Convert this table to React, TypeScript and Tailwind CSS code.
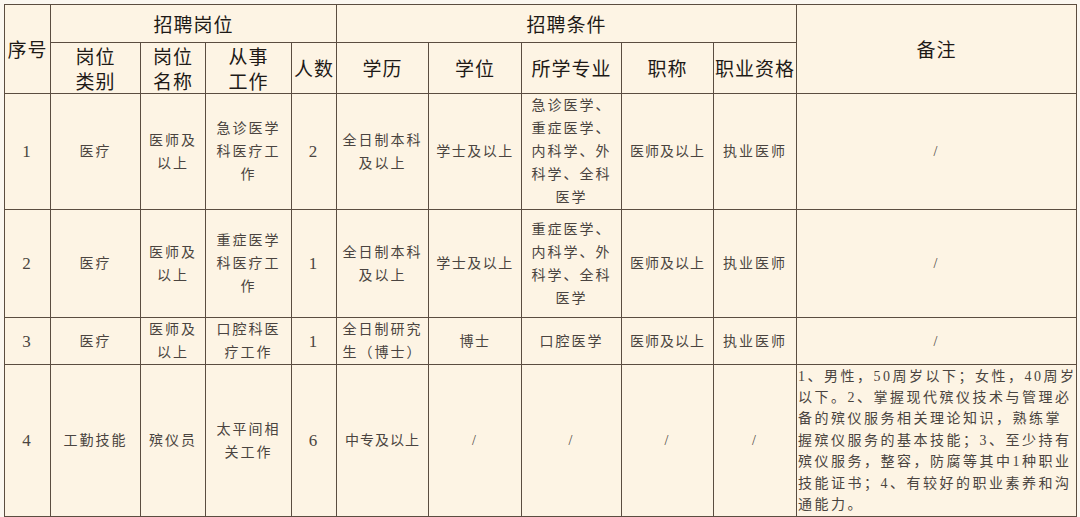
const body = "font-['Liberation_Serif','Noto_Sans_CJK_SC',serif] text-[14px] leading-[23px] tracking-[2px] text-[#4a4440]";

type Row = {
  no: string;
  type: string;
  name: string;
  work: string[];
  count: string;
  edu: string[];
  degree: string;
  major: string[];
  title: string;
  qual: string;
  note: string;
};

const ROWS: Row[] = [
  {
    no: "1",
    type: "医疗",
    name: "医师及以上",
    work: ["急诊医学", "科医疗工", "作"],
    count: "2",
    edu: ["全日制本科", "及以上"],
    degree: "学士及以上",
    major: ["急诊医学、", "重症医学、", "内科学、外", "科学、全科", "医学"],
    title: "医师及以上",
    qual: "执业医师",
    note: "/",
  },
  {
    no: "2",
    type: "医疗",
    name: "医师及以上",
    work: ["重症医学", "科医疗工", "作"],
    count: "1",
    edu: ["全日制本科", "及以上"],
    degree: "学士及以上",
    major: ["重症医学、", "内科学、外", "科学、全科", "医学"],
    title: "医师及以上",
    qual: "执业医师",
    note: "/",
  },
  {
    no: "3",
    type: "医疗",
    name: "医师及以上",
    work: ["口腔科医", "疗工作"],
    count: "1",
    edu: ["全日制研究", "生（博士）"],
    degree: "博士",
    major: ["口腔医学"],
    title: "医师及以上",
    qual: "执业医师",
    note: "/",
  },
];

const NOTE4 = [
  "1、男性，50周岁以下；女性，40周岁",
  "以下。2、掌握现代殡仪技术与管理必",
  "备的殡仪服务相关理论知识，熟练掌",
  "握殡仪服务的基本技能；3、至少持有",
  "殡仪服务，整容，防腐等其中1种职业",
  "技能证书；4、有较好的职业素养和沟",
  "通能力。",
];

const HEIGHTS = ["h-[116px]", "h-[108px]", "h-[44px]"];

function Lines({ items }: { items: string[] }) {
  return (
    <>
      {items.map((t, i) => (
        <div key={i}>{t}</div>
      ))}
    </>
  );
}

const cell = "border border-[#5b4d40] text-center align-middle p-0";
const num = `${cell} text-[17px]`;
const head = "border border-[#5b4d40] text-center align-middle p-0 font-['Noto_Sans_CJK_SC',sans-serif] text-[19px] leading-[24px] text-[#1e1a17] font-normal tracking-[1px]";
const head2 = `${head} leading-[25px]`;

function nameLines(s: string) {
  return s === "医师及以上" ? ["医师及", "以上"] : [s];
}

export default function App() {
  return (
    <div className="h-[517px] w-[1080px] overflow-hidden bg-[#fbf7f0] pt-[4px] pl-[4px]">
      <table className="border-collapse bg-[#fdf4e4] table-fixed w-[1072px]">
        <colgroup>
          <col className="w-[46px]" />
          <col className="w-[90px]" />
          <col className="w-[65px]" />
          <col className="w-[86px]" />
          <col className="w-[45px]" />
          <col className="w-[92px]" />
          <col className="w-[93px]" />
          <col className="w-[100px]" />
          <col className="w-[92px]" />
          <col className="w-[83px]" />
          <col className="w-[280px]" />
        </colgroup>
        <thead>
          <tr className="h-[38px]">
            <th rowSpan={2} className={head}>序号</th>
            <th colSpan={4} className={head}>招聘岗位</th>
            <th colSpan={5} className={head}>招聘条件</th>
            <th rowSpan={2} className={head}>备注</th>
          </tr>
          <tr className="h-[50px]">
            <th className={head2}><div>岗位</div><div>类别</div></th>
            <th className={head2}><div>岗位</div><div>名称</div></th>
            <th className={head2}><div>从事</div><div>工作</div></th>
            <th className={head}>人数</th>
            <th className={head}>学历</th>
            <th className={head}>学位</th>
            <th className={head}>所学专业</th>
            <th className={head}>职称</th>
            <th className={`${head} tracking-[0px]`}>职业资格</th>
          </tr>
        </thead>
        <tbody className={body}>
          {ROWS.map((r, i) => (
            <tr key={r.no} className={HEIGHTS[i]}>
              <td className={num}>{r.no}</td>
              <td className={cell}>{r.type}</td>
              <td className={cell}><Lines items={nameLines(r.name)} /></td>
              <td className={cell}><Lines items={r.work} /></td>
              <td className={num}>{r.count}</td>
              <td className={cell}><Lines items={r.edu} /></td>
              <td className={`${cell} tracking-[1.5px]`}>{r.degree}</td>
              <td className={cell}><Lines items={r.major} /></td>
              <td className={`${cell} tracking-[1px] whitespace-nowrap`}>{r.title}</td>
              <td className={cell}>{r.qual}</td>
              <td className={cell}>{r.note}</td>
            </tr>
          ))}
          <tr className="h-[152px]">
            <td className={num}>4</td>
            <td className={cell}>工勤技能</td>
            <td className={cell}>殡仪员</td>
            <td className={cell}><Lines items={["太平间相", "关工作"]} /></td>
            <td className={num}>6</td>
            <td className={`${cell} tracking-[1px] whitespace-nowrap`}>中专及以上</td>
            <td className={cell}>/</td>
            <td className={cell}>/</td>
            <td className={cell}>/</td>
            <td className={cell}>/</td>
            <td className={`${cell} text-left pl-[1px] tracking-[2.5px] text-[14px] leading-[21.4px] whitespace-nowrap`}>
              <Lines items={NOTE4} />
            </td>
          </tr>
        </tbody>
      </table>
    </div>
  );
}
